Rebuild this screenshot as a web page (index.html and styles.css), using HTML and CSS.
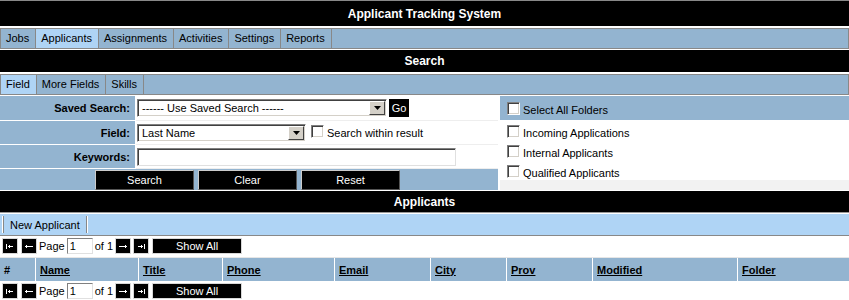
FILE: index.html
```html
<!DOCTYPE html>
<html lang="en">
<head>
    <meta charset="UTF-8">
    <title>Applicant Tracking System</title>
    <link rel="stylesheet" href="styles.css">
</head>
<body>

    <!-- Header -->
    <div class="title-bar">Applicant Tracking System</div>

    <div class="tabs main-tabs">
        <span class="tab">Jobs</span>
        <span class="tab active">Applicants</span>
        <span class="tab">Assignments</span>
        <span class="tab">Activities</span>
        <span class="tab">Settings</span>
        <span class="tab">Reports</span>
    </div>

    <!-- Search -->
    <div class="section-bar">Search</div>

    <div class="tabs sub-tabs">
        <span class="tab active">Field</span>
        <span class="tab">More Fields</span>
        <span class="tab">Skills</span>
    </div>

    <div class="search">
        <div class="search-form">
            <div class="form-row row-first">
                <div class="label">Saved Search:</div>
                <div class="value">
                    <div class="select select-saved">
                        <span class="select-text">------ Use Saved Search ------</span>
                        <span class="select-btn"><svg width="7" height="4" viewBox="0 0 7 4"><path d="M0 0H7L3.5 4Z" fill="#000"/></svg></span>
                    </div>
                    <span class="go-btn">Go</span>
                </div>
            </div>
            <div class="form-row">
                <div class="label">Field:</div>
                <div class="value">
                    <div class="select select-field">
                        <span class="select-text">Last Name</span>
                        <span class="select-btn"><svg width="7" height="4" viewBox="0 0 7 4"><path d="M0 0H7L3.5 4Z" fill="#000"/></svg></span>
                    </div>
                    <span class="check-inline">
                        <span class="check"></span>
                        <span class="check-label">Search within result</span>
                    </span>
                </div>
            </div>
            <div class="form-row">
                <div class="label">Keywords:</div>
                <div class="value">
                    <div class="text-input keywords"></div>
                </div>
            </div>
            <div class="form-actions">
                <span class="black-btn">Search</span>
                <span class="black-btn">Clear</span>
                <span class="black-btn">Reset</span>
            </div>
        </div>

        <div class="folders">
            <div class="check-row folder-head">
                <span class="check"></span>
                <span class="check-label">Select All Folders</span>
            </div>
            <div class="folder-list">
                <div class="check-row">
                    <span class="check"></span>
                    <span class="check-label">Incoming Applications</span>
                </div>
                <div class="check-row">
                    <span class="check"></span>
                    <span class="check-label">Internal Applicants</span>
                </div>
                <div class="check-row">
                    <span class="check"></span>
                    <span class="check-label">Qualified Applicants</span>
                </div>
            </div>
        </div>
    </div>

    <!-- Applicants -->
    <div class="section-bar applicants-bar">Applicants</div>

    <div class="toolbar">
        <span class="tool-btn">New Applicant</span>
    </div>

    <div class="pager">
        <span class="icon-btn"><svg width="14" height="14" viewBox="0 0 14 14" shape-rendering="crispEdges"><rect x="3" y="5" width="1" height="5" fill="#fff"/><path d="M5 7.5L7 5.5V9.5Z" fill="#fff"/><rect x="7" y="7" width="3" height="1" fill="#fff"/></svg></span>
        <span class="icon-btn"><svg width="14" height="14" viewBox="0 0 14 14" shape-rendering="crispEdges"><path d="M3 7.5L5 5.5V9.5Z" fill="#fff"/><rect x="5" y="7" width="6" height="1" fill="#fff"/></svg></span>
        <span class="pager-text">Page</span>
        <span class="page-input">1</span>
        <span class="pager-text">of 1</span>
        <span class="icon-btn"><svg width="14" height="14" viewBox="0 0 14 14" shape-rendering="crispEdges"><rect x="3" y="7" width="6" height="1" fill="#fff"/><path d="M11 7.5L9 5.5V9.5Z" fill="#fff"/></svg></span>
        <span class="icon-btn"><svg width="14" height="14" viewBox="0 0 14 14" shape-rendering="crispEdges"><rect x="4" y="7" width="3" height="1" fill="#fff"/><path d="M9 7.5L7 5.5V9.5Z" fill="#fff"/><rect x="10" y="5" width="1" height="5" fill="#fff"/></svg></span>
        <span class="show-all">Show All</span>
    </div>

    <div class="grid-head">
        <span class="col">#</span>
        <span class="col"><a href="#">Name</a></span>
        <span class="col"><a href="#">Title</a></span>
        <span class="col"><a href="#">Phone</a></span>
        <span class="col"><a href="#">Email</a></span>
        <span class="col"><a href="#">City</a></span>
        <span class="col"><a href="#">Prov</a></span>
        <span class="col"><a href="#">Modified</a></span>
        <span class="col"><a href="#">Folder</a></span>
    </div>

    <div class="pager">
        <span class="icon-btn"><svg width="14" height="14" viewBox="0 0 14 14" shape-rendering="crispEdges"><rect x="3" y="5" width="1" height="5" fill="#fff"/><path d="M5 7.5L7 5.5V9.5Z" fill="#fff"/><rect x="7" y="7" width="3" height="1" fill="#fff"/></svg></span>
        <span class="icon-btn"><svg width="14" height="14" viewBox="0 0 14 14" shape-rendering="crispEdges"><path d="M3 7.5L5 5.5V9.5Z" fill="#fff"/><rect x="5" y="7" width="6" height="1" fill="#fff"/></svg></span>
        <span class="pager-text">Page</span>
        <span class="page-input">1</span>
        <span class="pager-text">of 1</span>
        <span class="icon-btn"><svg width="14" height="14" viewBox="0 0 14 14" shape-rendering="crispEdges"><rect x="3" y="7" width="6" height="1" fill="#fff"/><path d="M11 7.5L9 5.5V9.5Z" fill="#fff"/></svg></span>
        <span class="icon-btn"><svg width="14" height="14" viewBox="0 0 14 14" shape-rendering="crispEdges"><rect x="4" y="7" width="3" height="1" fill="#fff"/><path d="M9 7.5L7 5.5V9.5Z" fill="#fff"/><rect x="10" y="5" width="1" height="5" fill="#fff"/></svg></span>
        <span class="show-all">Show All</span>
    </div>

</body>
</html>
```

FILE: styles.css
```css
/* Global */
body {
    margin: 0;
    font-family: "Liberation Sans", Arial, sans-serif;
    font-size: 11px;
    color: #000;
    background: #fff;
}

/* Title and section bars */
.title-bar {
    height: 25px;
    border-top: 1px solid #888;
    background: #000;
    color: #fff;
    font-size: 12px;
    font-weight: bold;
    display: flex;
    align-items: center;
    justify-content: center;
}

.section-bar {
    height: 22px;
    margin-top: 1px;
    background: #000;
    color: #fff;
    font-size: 12px;
    font-weight: bold;
    display: flex;
    align-items: center;
    justify-content: center;
}

.applicants-bar {
    height: 21px;
    border-bottom: 1px solid #999;
}

/* Tabs */
.tabs {
    display: flex;
    height: 19px;
    margin-top: 2px;
    border: 1px solid #888;
    border-left: none;
    background: #93b4d0;
}

.tab {
    padding: 0 6px 0 5px;
    line-height: 19px;
    border-right: 1px solid #888;
}

.tab:first-child {
    border-left: 1px solid #888;
}

.tab.active {
    background: #afd4f5;
}

/* Search form */
.search {
    display: flex;
    height: 94px;
    margin-top: 1px;
}

.search-form {
    width: 498px;
    display: flex;
    flex-direction: column;
}

.form-row {
    display: flex;
    height: 24px;
}

.form-row.row-first {
    height: 25px;
}

.label {
    width: 135px;
    margin-right: 1px;
    margin-bottom: 1px;
    padding-right: 5px;
    box-sizing: border-box;
    background: #93b4d0;
    font-weight: bold;
    display: flex;
    align-items: center;
    justify-content: flex-end;
}

.value {
    flex: 1;
    padding-left: 1px;
    background: #fff;
    border-bottom: 1px solid #eee;
    display: flex;
    align-items: center;
}

.select {
    height: 18px;
    box-sizing: border-box;
    border: 1px solid;
    border-color: #808080 #fff #fff #808080;
    box-shadow: inset 1px 1px #404040, inset -1px -1px #d4d0c8;
    background: #fff;
    display: flex;
    align-items: center;
    justify-content: space-between;
}

.select-saved {
    width: 250px;
}

.select-field {
    width: 169px;
}

.select-text {
    padding-left: 4px;
}

.select-btn {
    width: 16px;
    height: 14px;
    margin-right: 1px;
    box-sizing: border-box;
    background: #d4d0c8;
    border: 1px solid;
    border-color: #fff #404040 #404040 #fff;
    display: flex;
    align-items: center;
    justify-content: center;
}

.go-btn {
    width: 20px;
    height: 18px;
    margin-left: 2px;
    background: #000;
    color: #fff;
    display: flex;
    align-items: center;
    justify-content: center;
}

.text-input {
    height: 18px;
    box-sizing: border-box;
    border: 1px solid;
    border-color: #808080 #e0e0e0 #e0e0e0 #808080;
    box-shadow: inset 1px 1px #404040;
    background: #fff;
}

.keywords {
    width: 319px;
}

/* Checkboxes */
.check {
    width: 13px;
    height: 13px;
    flex-shrink: 0;
    box-sizing: border-box;
    border: 1px solid;
    border-color: #808080 #fff #fff #808080;
    box-shadow: inset 1px 1px #404040, inset -1px -1px #d4d0c8;
    background: #fff;
}

.check-label {
    margin-left: 3px;
    margin-top: 2px;
    line-height: 13px;
}

.check-inline {
    display: flex;
    align-items: flex-start;
    margin-left: 5px;
}

.form-actions {
    height: 21px;
    background: #93b4d0;
    display: flex;
    justify-content: center;
    gap: 4px;
    padding-right: 3px;
}

.black-btn {
    width: 99px;
    height: 20px;
    margin-top: 1px;
    box-sizing: border-box;
    border: 1px solid;
    border-color: #ccc #555 #555 #ccc;
    background: #000;
    color: #fff;
    display: flex;
    align-items: center;
    justify-content: center;
}

/* Folder panel */
.folders {
    flex: 1;
    margin-left: 2px;
    background: #f2f2f2;
    display: flex;
    flex-direction: column;
}

.check-row {
    display: flex;
    align-items: flex-start;
    padding-left: 7px;
}

.folder-head {
    height: 24px;
    padding-top: 6px;
    box-sizing: border-box;
    background: #93b4d0;
}

.folder-list {
    background: #fff;
}

.folder-list .check-row {
    height: 20px;
    padding-top: 5px;
    box-sizing: border-box;
}

/* Applicants toolbar */
.toolbar {
    height: 21px;
    margin-top: 1px;
    background: #afd4f5;
    border-bottom: 1px solid #888;
    display: flex;
    align-items: center;
}

.tool-btn {
    height: 17px;
    margin-left: 3px;
    padding: 0 6px;
    border-left: 1px solid #888;
    border-right: 1px solid #888;
    box-shadow: -1px 0 #fff, 1px 0 #fff;
    display: flex;
    align-items: center;
}

/* Pager */
.pager {
    height: 16px;
    margin-top: 2px;
    padding-left: 2px;
    display: flex;
    align-items: center;
    gap: 2px;
}

.icon-btn {
    width: 16px;
    height: 16px;
    box-sizing: border-box;
    border: 1px solid #d8d8d8;
    background: #000;
    display: flex;
}

.icon-btn:first-child {
    margin-right: 1px;
}

.page-input {
    width: 26px;
    height: 16px;
    box-sizing: border-box;
    padding-left: 2px;
    border: 1px solid;
    border-color: #808080 #e0e0e0 #e0e0e0 #808080;
    line-height: 14px;
}

.show-all {
    width: 90px;
    height: 16px;
    margin-left: 1px;
    box-sizing: border-box;
    border: 1px solid #d8d8d8;
    background: #000;
    color: #fff;
    display: flex;
    align-items: center;
    justify-content: center;
}

/* Grid header */
.grid-head {
    margin-top: 3px;
    border-top: 1px solid #e6e6e6;
    display: grid;
    grid-template-columns: 35px 102px 83px 111px 95px 75px 85px 144px 1fr;
    column-gap: 1px;
    background: #fff;
}

.col {
    height: 23px;
    padding-left: 4px;
    background: #93b4d0;
    font-weight: bold;
    display: flex;
    align-items: center;
}

.col a {
    color: #000;
    text-decoration: underline;
}
```
